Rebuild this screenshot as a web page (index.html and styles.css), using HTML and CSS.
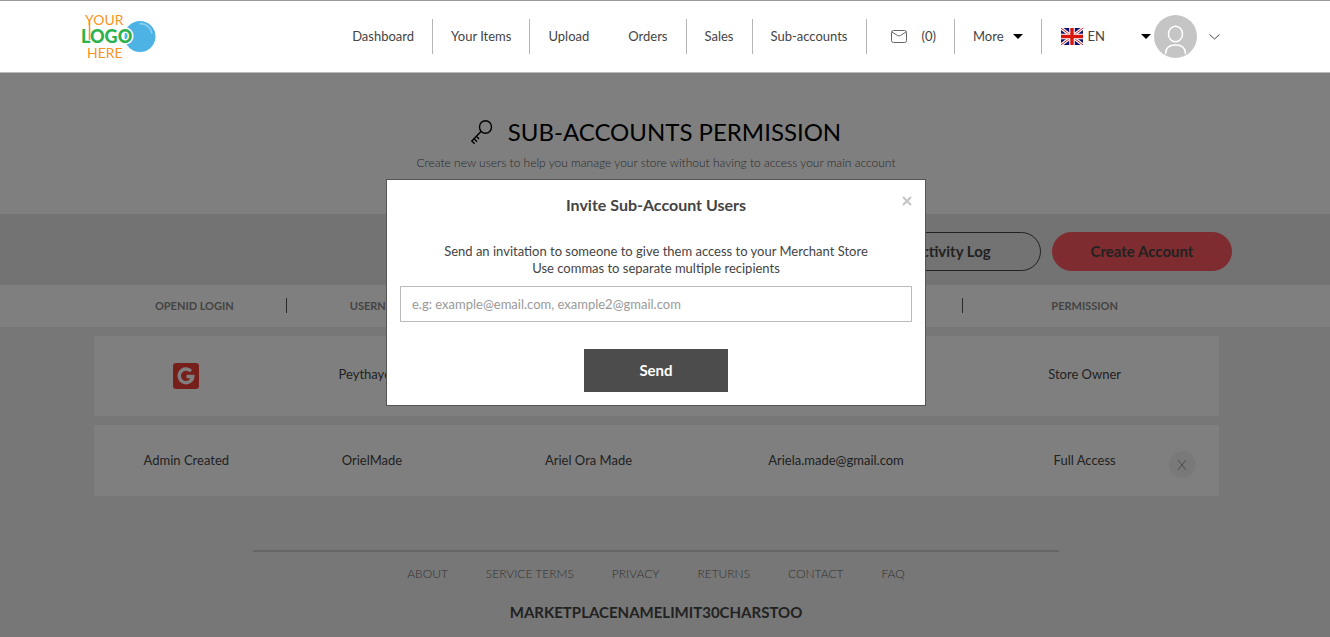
FILE: index.html
```html
<!DOCTYPE html>
<html lang="en">
  <head>
    <meta charset="UTF-8" />
    <meta name="viewport" content="width=device-width, initial-scale=1.0" />
    <title>Sub-accounts Permission</title>
    <link rel="stylesheet" href="styles.css">
  </head>
  <body>
    <header class="header">
      <a class="logo" href="#" aria-label="Home">
        <svg width="76" height="50" viewBox="0 0 76 50">
          <circle cx="59" cy="24.500" r="15.500" fill="#4db3e4" />
          <path d="M58.500 11.500c7 0 11.500 4.500 12.500 10" fill="none" stroke="#8fd0f0" stroke-width="1.500" />
          <text class="logo-thin" x="4" y="13">YOUR</text>
          <text class="logo-thin" x="6" y="46">HERE</text>
          <text class="logo-bold" x="0" y="31">LOGO</text>
          <path d="M8.500 8v20" stroke="#f7941e" stroke-width="1.500" />
        </svg>
      </a>
      <nav class="nav">
        <a class="divided" href="#">Dashboard</a>
        <a class="divided" href="#">Your Items</a>
        <a class="open" href="#">Upload</a>
        <a class="divided" href="#">Orders</a>
        <a class="divided" href="#">Sales</a>
        <a class="divided" href="#">Sub-accounts</a>
        <a class="divided mail" href="#">
          <svg width="16" height="13" viewBox="0 0 16 13" fill="none" stroke="#666">
            <rect x="0.500" y="0.500" width="15" height="12" rx="2" />
            <path d="M1 2l5.500 3.500q1.500 1 3 0L15 2" />
          </svg>
          <span>(0)</span>
        </a>
        <a class="divided more" href="#">More <span class="caret"></span></a>
        <a class="lang" href="#">
          <svg width="22" height="17" viewBox="0 0 22 17">
            <rect width="22" height="17" fill="#10106e" />
            <path d="M0 0l22 17M22 0L0 17" stroke="#fff" stroke-width="3" />
            <path d="M0 0l22 17M22 0L0 17" stroke="#e01b1b" stroke-width="1" />
            <path d="M11 0v17M0 8.500h22" stroke="#fff" stroke-width="5.500" />
            <path d="M11 0v17M0 8.500h22" stroke="#d8140c" stroke-width="3.400" />
          </svg>
          <span>EN</span>
          <span class="caret"></span>
        </a>
        <a class="profile" href="#" aria-label="Profile">
          <svg width="43" height="43" viewBox="0 0 43 43" fill="none" stroke="#fff" stroke-width="1.500">
            <circle cx="21.500" cy="21.500" r="21.500" fill="#c5c5c5" stroke="none" />
            <ellipse cx="21.500" cy="19" rx="7" ry="7.700" />
            <path d="M11.500 39c0-6 4-9 10-9s10 3 10 9" />
          </svg>
          <svg width="11" height="6" viewBox="0 0 11 6" fill="none" stroke="#444">
            <path d="M0.500 0.500l5 4.500 5-4.500" />
          </svg>
        </a>
      </nav>
    </header>

    <main>
      <section class="intro">
        <h1>
          <svg width="22" height="25" viewBox="0 0 22 25" fill="none" stroke="#000" stroke-width="1.400">
            <ellipse cx="14.500" cy="7" rx="6" ry="6.300" />
            <path d="M10 11.500L0.800 21l2.800 2.800M3 18.700l3 3M5.500 16.500l2.600 2.600" />
          </svg>
          SUB-ACCOUNTS PERMISSION
        </h1>
        <p>Create new users to help you manage your store without having to access your main account</p>
      </section>

      <section class="toolbar">
        <button class="pill">Activity Log</button>
        <button class="pill pill-red">Create Account</button>
      </section>

      <section class="accounts">
        <table>
          <colgroup>
            <col class="col-login">
            <col class="col-user">
            <col class="col-name">
            <col class="col-email">
            <col>
          </colgroup>
          <thead>
            <tr>
              <th>OPENID LOGIN</th>
              <th>USERNAME</th>
              <th></th>
              <th></th>
              <th>PERMISSION</th>
            </tr>
          </thead>
          <tbody>
            <tr class="owner">
              <td>
                <svg class="google" width="26" height="26" viewBox="0 0 26 26" role="img" aria-label="Google">
                  <rect width="26" height="26" rx="3" fill="#ee3f36" />
                  <path d="M18 8.200A6.800 6.800 0 1 0 19.800 13.500h-6.300" fill="none" stroke="#fff" stroke-width="3.400" />
                </svg>
              </td>
              <td>Peythayomi</td>
              <td></td>
              <td></td>
              <td>Store Owner</td>
            </tr>
            <tr>
              <td>Admin Created</td>
              <td>OrielMade</td>
              <td>Ariel Ora Made</td>
              <td>Ariela.made@gmail.com</td>
              <td>
                Full Access
                <button class="remove" aria-label="Remove">
                  <svg width="10" height="12" viewBox="0 0 10 12" stroke="#999">
                    <path d="M1 1l8 10M9 1L1 11" />
                  </svg>
                </button>
              </td>
            </tr>
          </tbody>
        </table>
      </section>
    </main>

    <footer class="footer">
      <nav class="footer-links">
        <a href="#">ABOUT</a>
        <a href="#">SERVICE TERMS</a>
        <a href="#">PRIVACY</a>
        <a href="#">RETURNS</a>
        <a href="#">CONTACT</a>
        <a href="#">FAQ</a>
      </nav>
      <p class="market-name">MARKETPLACENAMELIMIT30CHARSTOO</p>
    </footer>

    <div class="overlay">
      <form class="modal" role="dialog" aria-labelledby="modal-title">
        <button class="close" type="button" aria-label="Close">
          <svg width="10" height="10" viewBox="0 0 10 10" stroke="#c4c4c4" stroke-width="2">
            <path d="M1 1l8 8M9 1L1 9" />
          </svg>
        </button>
        <h2 id="modal-title">Invite Sub-Account Users</h2>
        <label for="emails">
          Send an invitation to someone to give them access to your Merchant Store<br>
          Use commas to separate multiple recipients
        </label>
        <input id="emails" type="text" placeholder="e.g: example@email.com, example2@gmail.com">
        <button class="send" type="button">Send</button>
      </form>
    </div>
  </body>
</html>
```

FILE: styles.css
```css
* {
  margin: 0;
  padding: 0;
  box-sizing: border-box;
}

body {
  font-family: Lato, sans-serif;
  font-size: 13px;
  line-height: 17px;
  color: #444;
  background: #efefef;
}

a {
  color: inherit;
  text-decoration: none;
}

button,
input {
  font-family: inherit;
  cursor: pointer;
}

svg {
  flex-shrink: 0;
}

/* header stays above the overlay */
.header {
  position: relative;
  z-index: 20;
  display: flex;
  align-items: center;
  justify-content: space-between;
  height: 73px;
  padding: 0 110px 0 81px;
  background: #fff;
  border-top: 1px solid #999;
  border-bottom: 1px solid #bbb;
}

.logo svg {
  display: block;
}

.logo-thin {
  font-size: 14px;
  fill: #f7941e;
}

.logo-bold {
  font-size: 18px;
  font-weight: 900;
  fill: #2bb24c;
  stroke: #fff;
  stroke-width: 3px;
  paint-order: stroke;
}

.nav {
  display: flex;
  align-items: center;
}

.nav a {
  display: flex;
  align-items: center;
  height: 35px;
  padding: 0 18px;
}

.nav .divided {
  border-right: 1px solid #b5b5b5;
}

.nav .open {
  padding-right: 21px;
}

.nav .mail {
  gap: 15px;
  padding-left: 24px;
}

.nav .more {
  gap: 9px;
}

.nav .lang {
  gap: 5px;
  padding-right: 3px;
  padding-left: 19px;
}

.lang .caret {
  margin-left: 31px;
}

.nav .profile {
  gap: 12px;
  padding: 0;
}

.caret {
  border: 5px solid transparent;
  border-top-color: #000;
  border-bottom: 0;
}

.intro,
.accounts,
.footer,
.overlay {
  padding-right: 18px;
}

.intro {
  height: 141px;
  padding-top: 44px;
  background: #fff;
  text-align: center;
}

.intro h1 {
  display: flex;
  align-items: center;
  justify-content: center;
  gap: 15px;
  font-size: 24px;
  font-weight: 400;
  line-height: 30px;
  color: #000;
}

.intro p {
  margin-top: 7px;
  font-size: 12px;
  font-weight: 300;
  color: #555;
}

.toolbar {
  display: flex;
  justify-content: flex-end;
  gap: 11px;
  padding: 18px 98px 14px 0;
  background: #e6e6e6;
}

.pill {
  width: 180px;
  height: 39px;
  padding-bottom: 2px;
  font-size: 15px;
  font-weight: 700;
  color: #444;
  background: transparent;
  border: 1px solid #444;
  border-radius: 20px;
}

.pill-red {
  background: #ff5960;
  border-color: #ff5960;
}

/* white band behind the column titles */
.accounts {
  background: linear-gradient(#fff 42px, transparent 42px);
}

table {
  width: 100%;
  max-width: 1125px;
  margin: 0 auto;
  table-layout: fixed;
  border-spacing: 0 9px;
  position: relative;
  top: -9px;
}

.col-login,
.col-user {
  width: 16.5%;
}

.col-name,
.col-email {
  width: 22%;
}

th {
  position: relative;
  height: 42px;
  padding-bottom: 2px;
  font-size: 11px;
  font-weight: 700;
  color: #888;
}

th:first-child,
th:nth-child(2) {
  padding-left: 16px;
}

th:not(:last-child)::after {
  content: "";
  position: absolute;
  top: 13px;
  right: -8px;
  height: 15px;
  border-right: 1px solid #555;
}

th:nth-child(4)::after {
  right: -3px;
}

td {
  position: relative;
  height: 71px;
  text-align: center;
  background: #fff;
}

th:last-child,
td:last-child {
  padding-right: 9px;
}

.owner td {
  height: 80px;
  padding-bottom: 3px;
}

.google {
  display: block;
  margin: 3px auto 0;
}

.remove {
  position: absolute;
  top: 26px;
  right: 23px;
  display: flex;
  align-items: center;
  justify-content: center;
  width: 27px;
  height: 27px;
  background: #f3f3f3;
  border: 0;
  border-radius: 50%;
}

.footer {
  margin-top: 36px;
  text-align: center;
}

.footer-links {
  display: flex;
  justify-content: center;
  gap: 38px;
  max-width: 806px;
  margin: 0 auto;
  padding-top: 13px;
  border-top: 2px solid #ccc;
  font-size: 12px;
  font-weight: 300;
  color: #666;
}

.market-name {
  margin-top: 22px;
  font-size: 15px;
  font-weight: 700;
}

.overlay {
  position: fixed;
  inset: 0;
  z-index: 10;
  display: flex;
  align-items: flex-start;
  justify-content: center;
  padding-top: 179px;
  background: rgba(0, 0, 0, 0.5);
}

.modal {
  position: relative;
  display: flex;
  flex-direction: column;
  width: 540px;
  padding: 15px 13px 13px;
  background: #fff;
  border: 1px solid #555;
  text-align: center;
}

.modal h2 {
  margin-bottom: 28px;
  font-size: 16px;
  font-weight: 700;
  line-height: 20px;
}

.close {
  position: absolute;
  top: 16px;
  right: 13px;
  width: 10px;
  height: 10px;
  background: none;
  border: 0;
}

.close svg {
  display: block;
}

.modal input {
  height: 36px;
  margin: 9px 0 27px;
  padding: 0 11px;
  font-size: 13px;
  border: 1px solid #bbb;
}

.modal input::placeholder {
  color: #999;
}

.send {
  align-self: center;
  width: 144px;
  height: 43px;
  padding-bottom: 2px;
  font-size: 15px;
  font-weight: 700;
  color: #fff;
  background: #4c4c4c;
  border: 0;
}
```
